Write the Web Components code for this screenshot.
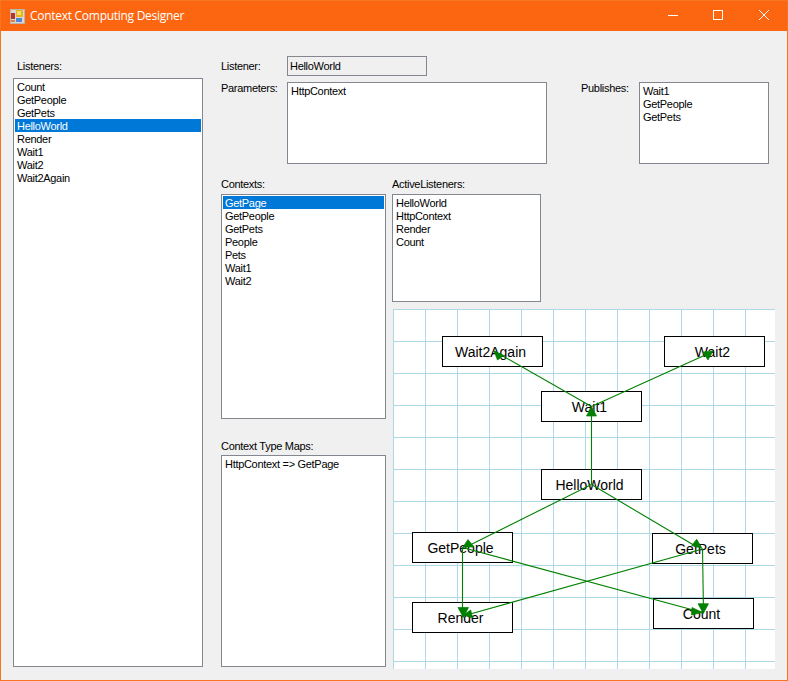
<!DOCTYPE html>
<html>
<head>
<meta charset="utf-8">
<title>Context Computing Designer</title>
<style>
    html, body { margin: 0; padding: 0; background: #f0f0f0; }
</style>
</head>
<body>
<cc-window caption="Context Computing Designer">
    <cc-column width="190" top="4">
        <cc-label indent="4" gap="5">Listeners:</cc-label>
        <cc-list height="589">
            <cc-item>Count</cc-item>
            <cc-item>GetPeople</cc-item>
            <cc-item>GetPets</cc-item>
            <cc-item selected>HelloWorld</cc-item>
            <cc-item>Render</cc-item>
            <cc-item>Wait1</cc-item>
            <cc-item>Wait2</cc-item>
            <cc-item>Wait2Again</cc-item>
        </cc-list>
    </cc-column>
    <cc-column width="554" left="18">
        <cc-row gap="0" bottom="6">
            <cc-label width="66" center>Listener:</cc-label>
            <cc-textbox width="140" height="20" readonly>HelloWorld</cc-textbox>
        </cc-row>
        <cc-row gap="0" bottom="14">
            <cc-label width="66">Parameters:</cc-label>
            <cc-textbox width="260" height="82" multiline>HttpContext</cc-textbox>
            <cc-label width="58" indent="34">Publishes:</cc-label>
            <cc-list width="130" height="82">
                <cc-item>Wait1</cc-item>
                <cc-item>GetPeople</cc-item>
                <cc-item>GetPets</cc-item>
            </cc-list>
        </cc-row>
        <cc-row gap="6">
            <cc-column width="165">
                <cc-label gap="3">Contexts:</cc-label>
                <cc-list height="225">
                    <cc-item selected>GetPage</cc-item>
                    <cc-item>GetPeople</cc-item>
                    <cc-item>GetPets</cc-item>
                    <cc-item>People</cc-item>
                    <cc-item>Pets</cc-item>
                    <cc-item>Wait1</cc-item>
                    <cc-item>Wait2</cc-item>
                </cc-list>
                <cc-label top="21" gap="2">Context Type Maps:</cc-label>
                <cc-textbox height="212" multiline>HttpContext =&gt; GetPage</cc-textbox>
            </cc-column>
            <cc-column width="383">
                <cc-label gap="3">ActiveListeners:</cc-label>
                <cc-list width="149" height="108">
                    <cc-item>HelloWorld</cc-item>
                    <cc-item>HttpContext</cc-item>
                    <cc-item>Render</cc-item>
                    <cc-item>Count</cc-item>
                </cc-list>
                <cc-graph>
                    <cc-node x="442" y="336">Wait2Again</cc-node>
                    <cc-node x="664" y="336">Wait2</cc-node>
                    <cc-node x="541" y="391">Wait1</cc-node>
                    <cc-node x="541" y="469">HelloWorld</cc-node>
                    <cc-node x="412" y="532">GetPeople</cc-node>
                    <cc-node x="652" y="533">GetPets</cc-node>
                    <cc-node x="412" y="602">Render</cc-node>
                    <cc-node x="653" y="598">Count</cc-node>
                </cc-graph>
            </cc-column>
        </cc-row>
    </cc-column>
</cc-window>

<script>
const UI_FONT = `"Liberation Sans", Arial, sans-serif`;

class CcWindow extends HTMLElement {
    constructor() {
        super();
        this.attachShadow({mode:'open'});
    }

    connectedCallback() {
        this.shadowRoot.innerHTML = `
        <style>
            :host{
                display: flex;
                flex-direction: column;
                width: 788px;
                height: 681px;
                box-sizing: border-box;
                border: 1px solid #f8751f;
                background: #f0f0f0;
                font: 11px/13px ${UI_FONT};
                letter-spacing: -0.3px;
                color: #000;
            }
            #title{
                display: flex;
                align-items: center;
                height: 30px;
                flex: none;
                background: #fd6610;
                color: #fff;
                font: 12px/16px "Open Sans", sans-serif;
                letter-spacing: -0.28px;
                padding-left: 9px;
            }
            #caption{
                margin-left: 5px;
                flex: 1;
            }
            .btn{
                width: 46px;
                height: 28px;
                padding-bottom: 2px;
                display: flex;
                align-items: center;
                justify-content: center;
            }
            #min{
                box-sizing: border-box;
                padding-left: 2px;
                height: 30px;
            }
            #main{
                flex: 1;
                display: flex;
                padding: 25px 0 0 12px;
            }
        </style>
        <div id="title">
            <svg width="15" height="15" viewBox="0 0 15 15">
                <rect width="15" height="15" fill="#b9b4ac"/>
                <rect x="1" y="1" width="13" height="13" fill="#dcd8cf"/>
                <rect x="6" y="1" width="7" height="7" fill="#e8b520"/>
                <rect x="7" y="2" width="4" height="4" fill="#f6dc6a"/>
                <rect x="1" y="4" width="4" height="6" fill="#b8322a"/>
                <rect x="6" y="9" width="6" height="4" fill="#4f86d8"/>
                <rect x="1" y="11" width="2" height="2" fill="#e0803a"/>
                <rect x="3" y="11" width="2" height="2" fill="#e0803a"/>
            </svg>
            <span id="caption">${this.getAttribute('caption')}</span>
            <div class="btn" id="min">
                <svg width="10" height="10" viewBox="0 0 10 10"><path d="M0 5.5H10" stroke="#fff" fill="none"/></svg>
            </div>
            <div class="btn">
                <svg width="10" height="10" viewBox="0 0 10 10"><rect x=".5" y=".5" width="9" height="9" stroke="#fff" fill="none"/></svg>
            </div>
            <div class="btn">
                <svg width="10" height="10" viewBox="0 0 10 10"><path d="M0 0L10 10M10 0L0 10" stroke="#fff" fill="none"/></svg>
            </div>
        </div>
        <div id="main"><slot></slot></div>
        `;
    }
}

class CcColumn extends HTMLElement {
    constructor() {
        super();
        this.attachShadow({mode:'open'});
    }

    connectedCallback() {
        this.shadowRoot.innerHTML = `
        <style>
            :host{
                display: flex;
                flex-direction: column;
                flex: none;
                width: ${this.getAttribute('width')}px;
                margin-left: ${this.getAttribute('left') || 0}px;
                margin-top: ${this.getAttribute('top') || 0}px;
            }
        </style>
        <slot></slot>
        `;
    }
}

class CcRow extends HTMLElement {
    constructor() {
        super();
        this.attachShadow({mode:'open'});
    }

    connectedCallback() {
        this.shadowRoot.innerHTML = `
        <style>
            :host{
                display: flex;
                flex: none;
                column-gap: ${this.getAttribute('gap') || 0}px;
                margin-bottom: ${this.getAttribute('bottom') || 0}px;
            }
        </style>
        <slot></slot>
        `;
    }
}

class CcLabel extends HTMLElement {
    constructor() {
        super();
        this.attachShadow({mode:'open'});
    }

    connectedCallback() {
        const width = this.getAttribute('width');
        this.shadowRoot.innerHTML = `
        <style>
            :host{
                display: block;
                flex: none;
                white-space: nowrap;
                box-sizing: content-box;
                ${width ? `width: ${width}px;` : ''}
                ${this.hasAttribute('center') ? 'align-self: center;' : ''}
                padding-left: ${this.getAttribute('indent') || 0}px;
                margin-top: ${this.getAttribute('top') || 0}px;
                margin-bottom: ${this.getAttribute('gap') || 0}px;
            }
        </style>
        <slot></slot>
        `;
    }
}

class CcList extends HTMLElement {
    constructor() {
        super();
        this.attachShadow({mode:'open'});
    }

    connectedCallback() {
        const width = this.getAttribute('width');
        this.shadowRoot.innerHTML = `
        <style>
            :host{
                display: block;
                flex: none;
                box-sizing: border-box;
                ${width ? `width: ${width}px;` : ''}
                height: ${this.getAttribute('height')}px;
                border: 1px solid #828790;
                background: #fff;
                padding: 1px;
            }
        </style>
        <slot></slot>
        `;
    }
}

class CcItem extends HTMLElement {
    constructor() {
        super();
        this.attachShadow({mode:'open'});
    }

    connectedCallback() {
        this.shadowRoot.innerHTML = `
        <style>
            :host{
                display: block;
                height: 12px;
                padding: 1px 0 0 2px;
                line-height: 12px;
                white-space: nowrap;
            }
            :host([selected]){
                background: #0078d7;
                color: #fff;
            }
        </style>
        <slot></slot>
        `;
    }
}

class CcTextbox extends HTMLElement {
    constructor() {
        super();
        this.attachShadow({mode:'open'});
    }

    connectedCallback() {
        const width = this.getAttribute('width');
        const multi = this.hasAttribute('multiline');
        this.shadowRoot.innerHTML = `
        <style>
            :host{
                display: flex;
                flex: none;
                box-sizing: border-box;
                ${width ? `width: ${width}px;` : ''}
                height: ${this.getAttribute('height')}px;
                border: 1px solid #828790;
                background: ${this.hasAttribute('readonly') ? '#f0f0f0' : '#fff'};
                padding: ${multi ? '2px 3px' : '0 2px'};
                align-items: ${multi ? 'flex-start' : 'center'};
                white-space: nowrap;
            }
        </style>
        <slot></slot>
        `;
    }
}

class CcGraph extends HTMLElement {
    constructor() {
        super();
        this.attachShadow({mode:'open'});
    }

    // page coordinates, the viewBox of the svg starts where the canvas starts
    edges() {
        return [
            [591.5, 484.5, 591.5, 407],
            [591.5, 406.5, 494, 351],
            [591.5, 406.5, 713, 351.5],
            [591.5, 484.5, 468, 546],
            [591.5, 484.5, 697, 547],
            [462.5, 547, 462.5, 617],
            [702.5, 548.5, 703.5, 613],
            [462.5, 547.5, 702.5, 612.5],
            [702.5, 549, 463, 616]
        ].map(e => `<line x1="${e[0]}" y1="${e[1]}" x2="${e[2]}" y2="${e[3]}"/>`).join('');
    }

    heads() {
        return [
            '591.5,406.5 586.5,416 596.5,416',
            '494,351 504,355.5 497.5,360',
            '703,352 713,351 708,360',
            '468,539.5 463,547 474,547',
            '696.7,539.3 691.7,545.5 702,548.3',
            '458,607.5 468.5,607.5 463.3,617.5',
            '463.3,615 470.7,610 472.7,618',
            '698,603.7 708.5,603.7 703.3,613.5',
            '692,607.5 691.5,615 702.5,612.5'
        ].map(p => `<polygon points="${p}"/>`).join('');
    }

    connectedCallback() {
        this.shadowRoot.innerHTML = `
        <style>
            :host{
                display: block;
                position: relative;
                flex: none;
                width: 382px;
                height: 360px;
                margin: 7px 0 0 1px;
                background-color: #fff;
                background-image:
                    linear-gradient(to right, #add8e6 1px, transparent 1px),
                    linear-gradient(to bottom, #add8e6 1px, transparent 1px);
                background-size: 32px 32px;
                overflow: hidden;
            }
            svg{
                position: absolute;
                left: 0;
                top: 0;
            }
            line{
                stroke: #008000;
                stroke-width: 1.1;
            }
            polygon{
                fill: #008000;
                stroke: #008000;
                stroke-width: 0.7;
            }
        </style>
        <slot></slot>
        <svg width="382" height="360" viewBox="393 309 382 360">
            ${this.edges()}
            ${this.heads()}
        </svg>
        `;
    }
}

class CcNode extends HTMLElement {
    constructor() {
        super();
        this.attachShadow({mode:'open'});
    }

    connectedCallback() {
        this.shadowRoot.innerHTML = `
        <style>
            :host{
                position: absolute;
                left: ${this.getAttribute('x') - 393}px;
                top: ${this.getAttribute('y') - 309}px;
                width: 101px;
                height: 31px;
                box-sizing: border-box;
                border: 1px solid #000;
                background: #fff;
                display: flex;
                align-items: center;
                justify-content: center;
                padding: 0 4px 0 0;
                font: 14px/16px "Liberation Sans", Arial, sans-serif;
                letter-spacing: 0;
                color: #000;
            }
        </style>
        <slot></slot>
        `;
    }
}

window.customElements.define('cc-window', CcWindow);
window.customElements.define('cc-column', CcColumn);
window.customElements.define('cc-row', CcRow);
window.customElements.define('cc-label', CcLabel);
window.customElements.define('cc-list', CcList);
window.customElements.define('cc-item', CcItem);
window.customElements.define('cc-textbox', CcTextbox);
window.customElements.define('cc-graph', CcGraph);
window.customElements.define('cc-node', CcNode);
</script>
</body>
</html>
